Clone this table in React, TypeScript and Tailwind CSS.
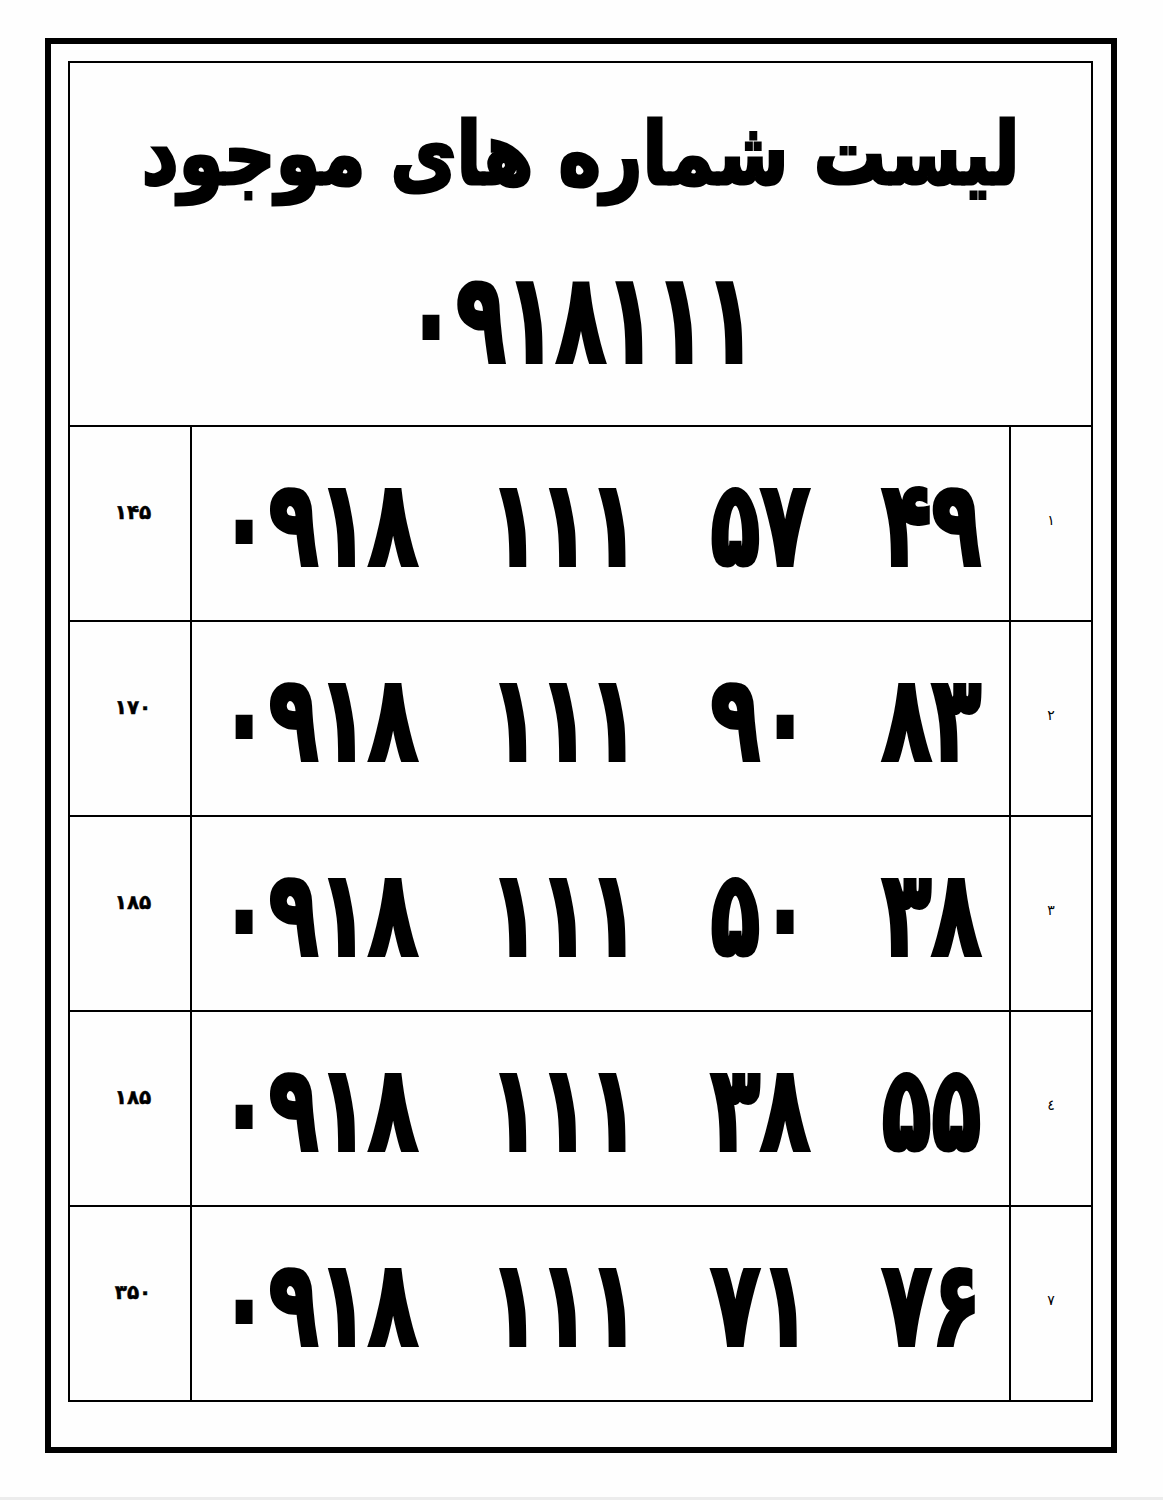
export default function App() {
  const rows = [
    { price: "۱۴۵", num: ["۰۹۱۸", "۱۱۱", "۵۷", "۴۹"], idx: "۱" },
    { price: "۱۷۰", num: ["۰۹۱۸", "۱۱۱", "۹۰", "۸۳"], idx: "۲" },
    { price: "۱۸۵", num: ["۰۹۱۸", "۱۱۱", "۵۰", "۳۸"], idx: "۳" },
    { price: "۱۸۵", num: ["۰۹۱۸", "۱۱۱", "۳۸", "۵۵"], idx: "٤" },
    { price: "۳۵۰", num: ["۰۹۱۸", "۱۱۱", "۷۱", "۷۶"], idx: "۷" },
  ];

  return (
    <div className="relative h-[1500px] w-full bg-[#fefefe] font-['DejaVu_Sans',sans-serif] text-black">
      <div className="pl-[45px] pt-[38px]">
        <div className="flex h-[1415px] w-[1072px] flex-col border-[6px] border-black px-[17px] pt-[17px]">
          <div className="flex w-[1025px] flex-col border-2 border-black">
            {/* header */}
            <div className="flex h-[362px] flex-col items-center overflow-hidden">
              <div
                dir="rtl"
                className="mt-[32px] shrink-0 scale-x-[0.9] scale-y-[1.08] whitespace-nowrap text-[80px] font-bold leading-[120px] [-webkit-text-stroke:3px_black]"
              >
                لیست شماره های موجود
              </div>
              <div className="mt-[44px] shrink-0 scale-x-[0.66] whitespace-nowrap text-[124px] font-bold leading-[120px] tracking-[-8px] [-webkit-text-stroke:4px_black]">
                ۰۹۱۸۱۱۱
              </div>
            </div>

            {rows.map((r, i) => (
              <div
                key={i}
                className="grid h-[195px] grid-cols-[120px_821px_80px] border-t-2 border-black"
              >
                <div className="flex items-center justify-center pb-[24px] pl-[6px] text-[20px] font-bold [-webkit-text-stroke:0.5px_black]">
                  {r.price}
                </div>
                <div className="flex items-center justify-center overflow-hidden border-x-2 border-black">
                  <div className="flex shrink-0 scale-x-[0.69] items-center gap-[104px] whitespace-nowrap text-[118px] font-bold leading-none [-webkit-text-stroke:4px_black]">
                    {r.num.map((g, j) => (
                      <span key={j} className="tracking-[-6px]">
                        {g}
                      </span>
                    ))}
                  </div>
                </div>
                <div className="flex items-center justify-center pb-[6px] text-[14px]">
                  {r.idx}
                </div>
              </div>
            ))}
          </div>
        </div>
      </div>
      <div className="absolute bottom-0 left-0 h-[3px] w-full bg-[#ececec]" />
    </div>
  );
}
